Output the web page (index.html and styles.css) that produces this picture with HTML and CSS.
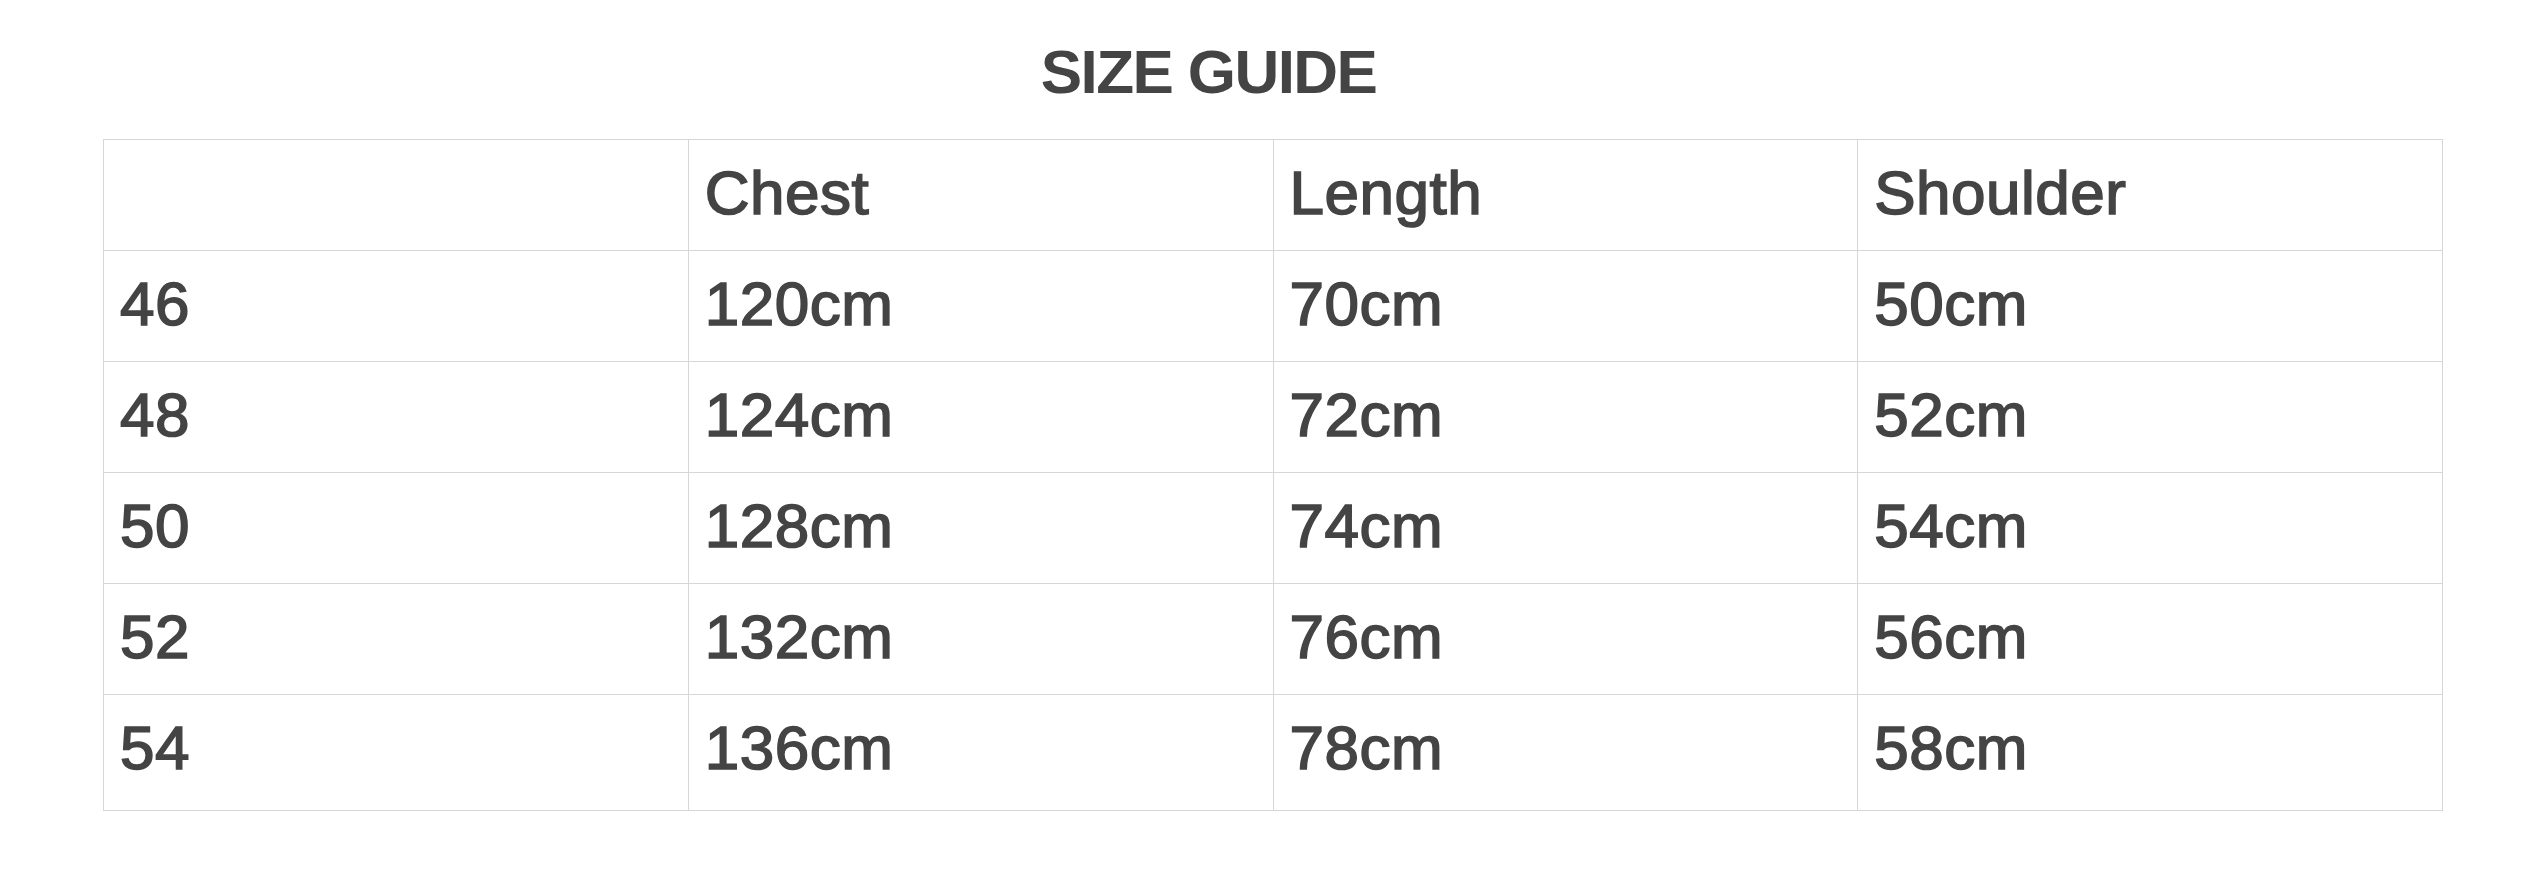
FILE: index.html
```html
<!DOCTYPE html>
<html>
<head>
<meta charset="utf-8">
<link rel="stylesheet" href="styles.css">
</head>
<body>
<div class="page">
  <h2 class="title">SIZE GUIDE</h2>
  <table class="sizes">
    <tr><td></td><td>Chest</td><td>Length</td><td>Shoulder</td></tr>
    <tr><td>46</td><td>120cm</td><td>70cm</td><td>50cm</td></tr>
    <tr><td>48</td><td>124cm</td><td>72cm</td><td>52cm</td></tr>
    <tr><td>50</td><td>128cm</td><td>74cm</td><td>54cm</td></tr>
    <tr><td>52</td><td>132cm</td><td>76cm</td><td>56cm</td></tr>
    <tr class="last"><td>54</td><td>136cm</td><td>78cm</td><td>58cm</td></tr>
  </table>
</div>
</body>
</html>
```
FILE: styles.css
```css
html, body {
  margin: 0;
  padding: 0;
  background: #ffffff;
}
.page {
  padding-left: 103px;
  width: 2340px;
  font-family: "Liberation Sans", Arial, sans-serif;
  color: #444444;
}
.title {
  margin: 0;
  padding: 41px 129px 36px 0;
  font-size: 62px;
  line-height: 62px;
  font-weight: 700;
  letter-spacing: -1.6px;
  text-align: center;
}
.sizes {
  width: 2340px;
  table-layout: fixed;
  border-collapse: collapse;
  font-size: 62px;
  line-height: 62px;
  letter-spacing: 0.5px;
  -webkit-text-stroke: 1.6px #444444;
}
.sizes td {
  border: 1px solid #d6d6d6;
  padding: 22px 16px 26px 16px;
  width: 25%;
  height: 62px;
  vertical-align: top;
}
.sizes tr.last td {
  padding-bottom: 31px;
}
```
